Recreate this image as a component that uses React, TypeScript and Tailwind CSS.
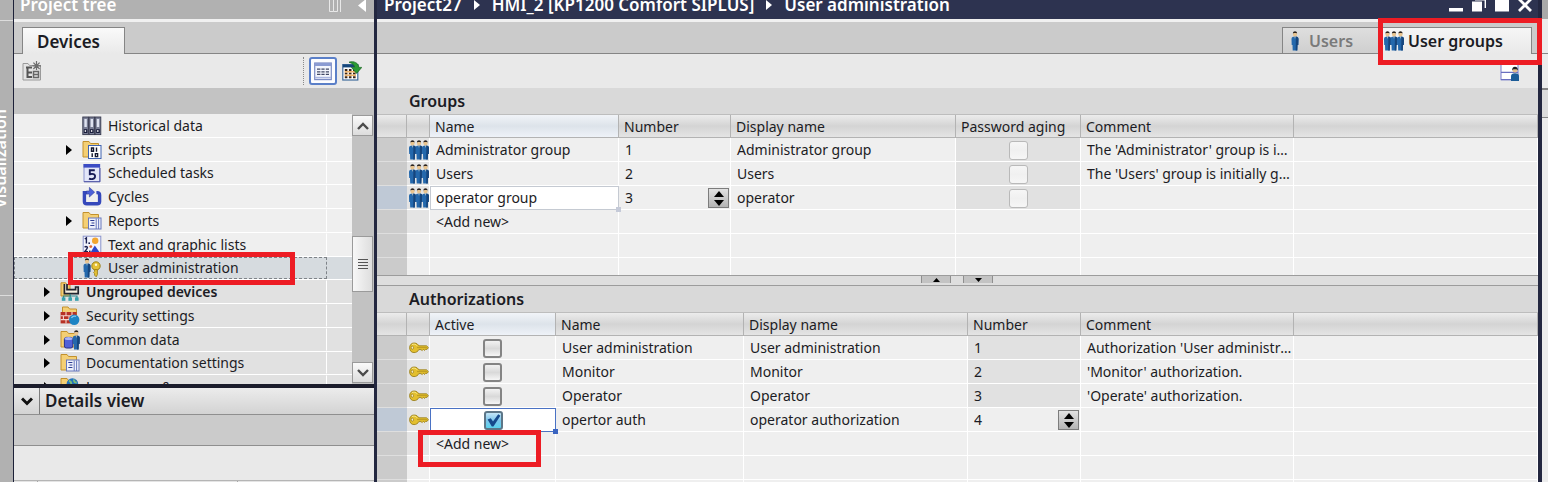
import React, { useState } from "react";

/* ---------- icons ---------- */

function PersonShape({ x = 0 }: { x?: number }) {
  return (
    <g transform={`translate(${x} 0)`}>
      <ellipse cx="3.5" cy="3.2" rx="2" ry="2.5" fill="#e9c48f" />
      <path d="M1.4 2.6C1.4-.4 5.6-.4 5.6 2.6L4.6 1.9H2.6Z" fill="#2a2320" />
      <path d="M0 8C0 6 1.6 5.4 3.5 5.4S7 6 7 8L6.8 14H6L5.8 19.4H1.2L1 14H.2Z" fill="#2468ac" />
      <path d="M4.4 5.6C6 5.8 7 6.4 7 8L6.8 14H6L5.8 19.4H4.2Z" fill="#16457c" />
      <path d="M3 5.6H4L3.5 8Z" fill="#f3e3c8" />
    </g>
  );
}

function GroupIcon() {
  return (
    <svg width="20" height="20" viewBox="0 0 20 20" className="shrink-0" aria-hidden="true">
      <PersonShape x={0} />
      <PersonShape x={6.5} />
      <PersonShape x={13} />
    </svg>
  );
}

function UserIcon() {
  return (
    <svg width="8" height="20" viewBox="0 0 8 20" className="shrink-0" aria-hidden="true">
      <PersonShape x={0.5} />
    </svg>
  );
}

function KeyIcon() {
  return (
    <svg width="20" height="12" viewBox="0 0 20 12" className="shrink-0" aria-hidden="true">
      <path
        d="M5 1C8 1 9 2.6 9.8 3.8H17.5L19.4 5.6L18 7.4L16.6 7.2L15.6 8.4L14.4 7.4L13.2 8.6L12 7.6H9.8C9 9.4 7.4 10.6 5 10.6C2.2 10.6.6 8.4.6 5.8S2.2 1 5 1Z"
        fill="#e3bf2e"
        stroke="#94790f"
        strokeWidth="0.8"
      />
      <path d="M3 2.6C4.6 1.8 6.8 2 8 3.8" stroke="#f8e98c" strokeWidth="1" fill="none" />
      <ellipse cx="3.3" cy="5.7" rx="1.1" ry="1.6" fill="#fff7cf" stroke="#8f7413" strokeWidth="0.7" />
      <path d="M8 5.6H18" stroke="#b3921e" strokeWidth="0.8" />
    </svg>
  );
}

function FolderBack() {
  return (
    <path d="M1 1.5H7L8.5 3.5H16.5V17H1Z" fill="#f4cf74" stroke="#c3912c" strokeWidth="1" />
  );
}

function SheetShape() {
  return (
    <g>
      <rect x="6.5" y="7" width="12.5" height="11" fill="#eef1fb" stroke="#6878bd" />
      <path d="M8.3 9.5H12.4M9.5 12H12.4M8.3 14.5H12.4" stroke="#2d3d93" strokeWidth="1.2" />
      <path d="M14.2 7.5V18M16.6 7.5V18" stroke="#6878bd" />
    </g>
  );
}

type IconName =
  | "history"
  | "scripts"
  | "tasks"
  | "cycles"
  | "reports"
  | "lists"
  | "useradmin"
  | "devices"
  | "security"
  | "common"
  | "docs"
  | "languages";

function TreeIcon({ name }: { name: IconName }) {
  return (
    <svg width="20" height="20" viewBox="0 0 20 20" className="shrink-0" aria-hidden="true">
      {name === "history" && (
        <g>
          {[0.8, 7, 13.2].map((x) => (
            <g key={x}>
              <rect x={x} y="1" width="5.6" height="17.6" fill="#7a7f96" stroke="#35384d" strokeWidth="0.9" />
              <rect x={x + 1.6} y="3" width="2.4" height="8" fill="#dfe3f0" />
              <rect x={x + 1} y="13.2" width="3.6" height="3.8" fill="#181b38" />
              <rect x={x + 1.9} y="14.2" width="1.4" height="1.6" fill="#fff" />
            </g>
          ))}
        </g>
      )}
      {name === "scripts" && (
        <g>
          <FolderBack />
          <rect x="6.5" y="5.5" width="12.5" height="13" fill="#fff" stroke="#3f63b0" />
          <path d="M9.5 8V11.2H11.5V8ZM14.5 7.4V11.8M10.2 13.2V17M13.4 13.6V16.6H15.6V13.6Z" fill="none" stroke="#14182e" strokeWidth="1.4" />
        </g>
      )}
      {name === "tasks" && (
        <g>
          <rect x="2" y="1.5" width="15.6" height="17" fill="#e3e6f9" stroke="#8c93cf" />
          <rect x="1.5" y="1" width="16.6" height="3.6" fill="#3c4cc4" />
          <path d="M12.8 7.2H7.8V11.2C12.6 10.2 13.4 12.2 13 14C12.6 16.2 9.4 16.6 7 15.6" fill="none" stroke="#181c58" strokeWidth="1.9" />
          <path d="M18 5V18.8H2" stroke="#4a50a0" fill="none" />
        </g>
      )}
      {name === "cycles" && (
        <g>
          <path d="M5.4 5.6H2.4V14.4Q2.4 16.8 4.8 16.8H15.2Q17.6 16.8 17.6 14.4V8Q17.6 5.6 15.2 5.6H14.4" fill="none" stroke="#3548bb" strokeWidth="3.4" />
          <path d="M4.4 4H7.4V.4L12.6 5.2L7.4 10V7H4.4Z" fill="#4c60d8" stroke="#2b3a9c" strokeWidth="0.6" />
        </g>
      )}
      {(name === "reports" || name === "docs") && (
        <g>
          <FolderBack />
          <SheetShape />
        </g>
      )}
      {name === "lists" && (
        <g>
          <rect x="1.2" y="1.2" width="17.6" height="17.2" fill="#f3f4fc" stroke="#8a93cc" />
          <path d="M2.8 4L4.4 2.8V8.4M2.6 12.2Q4 10.8 5.4 12.2Q5.6 13.6 2.8 16.6H6" fill="none" stroke="#1c2050" strokeWidth="1.4" />
          <rect x="6.4" y="7.4" width="1.6" height="1.6" fill="#1c2050" />
          <rect x="7" y="15.6" width="1.6" height="1.6" fill="#1c2050" />
          <circle cx="13.2" cy="5.8" r="3.2" fill="#f2a62f" />
          <path d="M12.8 10.4L17.4 17H8.8Z" fill="#2b45c9" />
          <circle cx="8.8" cy="11.6" r="1.4" fill="#e0662d" />
        </g>
      )}
      {name === "useradmin" && (
        <g>
          <PersonShape x={1.5} />
          <circle cx="14" cy="8" r="4.2" fill="#e5c136" stroke="#94780f" strokeWidth="0.9" />
          <circle cx="14" cy="6.8" r="1.2" fill="#fff7cf" />
          <path d="M12.6 11.6H15.4V16.6L14.2 18.8L12.6 17.2V15.6L11.6 14.6L12.6 13.6Z" fill="#e5c136" stroke="#94780f" strokeWidth="0.8" />
        </g>
      )}
      {name === "devices" && (
        <g>
          <path d="M1 .8H5.6L7 2.6H10V14H1Z" fill="#f4cf74" stroke="#c3912c" />
          <path d="M4.4 2V11.6H18.2V5H15.6V7.6H7V2" fill="#f6efe0" stroke="#20242f" strokeWidth="1.7" />
          <path d="M3.5 16V14H17V16M10.2 12V16" stroke="#2d8a93" fill="none" strokeWidth="1.2" />
          <rect x="1.8" y="15.4" width="3.6" height="3.4" fill="#37a1ad" />
          <rect x="8.4" y="15.4" width="3.6" height="3.4" fill="#37a1ad" />
          <rect x="15" y="15.4" width="3.6" height="3.4" fill="#37a1ad" />
        </g>
      )}
      {name === "security" && (
        <g>
          <path d="M2.5 1H8L9.6 3H16.5V9H2.5Z" fill="#f4cf74" stroke="#c3912c" />
          <rect x=".6" y="6" width="16" height="11.4" fill="#b73125" />
          <path d="M.6 9.8H16.6M.6 13.6H16.6M6 6V9.8M12 6V9.8M3.4 9.8V13.6M9 9.8V13.6M6 13.6V17.4" stroke="#f3d6cf" strokeWidth="1.1" />
          <circle cx="14.2" cy="13.8" r="5.2" fill="#1d84c4" />
          <path d="M11.4 12Q13 9.4 16 10.4" stroke="#7fc6ee" strokeWidth="1.4" fill="none" />
        </g>
      )}
      {name === "common" && (
        <g>
          <FolderBack />
          <rect x="4.4" y="7.4" width="8.4" height="10.6" rx="2" fill="#5161d8" stroke="#27318e" />
          <ellipse cx="8.6" cy="8.4" rx="4" ry="1.5" fill="#aab4f5" />
          <PersonShape x={12.8} />
        </g>
      )}
      {name === "languages" && (
        <g>
          <FolderBack />
          <circle cx="12.4" cy="7" r="5.8" fill="#2272bd" />
          <path d="M9 3.6Q12 5 11 7.6M14 2.4Q13.6 5.6 16.8 5.6" stroke="#7bc07b" strokeWidth="1.8" fill="none" />
        </g>
      )}
    </svg>
  );
}

function NewGroupIcon() {
  return (
    <svg width="20" height="20" viewBox="0 0 20 20" aria-hidden="true">
      <path d="M1 2.5H6L7.5 4.5H18.5V19H1Z" fill="#e4e4e4" stroke="#9a9a9a" />
      <path d="M4 6.5H10M5.5 6.5V16H10M5.5 11.5H10" stroke="#555" strokeWidth="2" fill="none" />
      <path d="M14.5 0V9M10.4 4.8H19M11.4 1.6L17.6 8M17.6 1.6L11.4 8" stroke="#6d6d6d" strokeWidth="1.2" />
      <path d="M11.5 10.5H16.5V16.5H11.5ZM11.5 13.5H16.5" stroke="#666" strokeWidth="1.5" fill="none" />
    </svg>
  );
}

function OverviewIcon() {
  return (
    <svg width="18" height="19" viewBox="0 0 18 19" aria-hidden="true">
      <rect x=".7" y="1" width="16.6" height="16.6" fill="#f4f6fd" stroke="#7c8cc4" strokeWidth="1.2" />
      <rect x=".7" y="1" width="16.6" height="3" fill="#8b9bd2" />
      <path d="M3 7.2H6.4M7.4 7.2H10.6M11.8 7.2H15M3 9.8H6.4M7.4 9.8H10.6M11.8 9.8H15M3 12.4H6.4M7.4 12.4H10.6M11.8 12.4H15" stroke="#414865" strokeWidth="1.3" />
      <path d="M1 15.6H17" stroke="#aab6df" strokeWidth="1.6" />
    </svg>
  );
}

function OpenEditorIcon() {
  return (
    <svg width="20" height="20" viewBox="0 0 20 20" aria-hidden="true">
      <rect x=".8" y="3.6" width="15" height="15.4" fill="#fff" stroke="#3f6c9c" strokeWidth="1.2" />
      <rect x=".8" y="3.6" width="15" height="2.8" fill="#16477b" />
      <path d="M2.8 9H5.4M6.9 9H9.5M11 9H13.6M2.8 12.6H5.4M6.9 12.6H9.5M11 12.6H13.6M2.8 16.2H5.4M6.9 16.2H9.5M11 16.2H13.6" stroke="#3a2616" strokeWidth="2" />
      <path d="M2.6 10.7H14M2.6 14.3H14" stroke="#f0b46a" strokeWidth="1.4" />
      <path d="M7 1.2C12-.4 16.6 2 16.8 6.4H19.8L14.6 12.4L9.4 6.4H12.6C12.2 4 10.4 2.2 7 1.2Z" fill="#2b9b34" stroke="#17651f" strokeWidth="0.7" />
    </svg>
  );
}

function DialogUserIcon() {
  return (
    <svg width="20" height="19" viewBox="0 0 20 19" aria-hidden="true">
      <rect x="1" y="1" width="17" height="15.6" fill="#fff" stroke="#8c8fd6" strokeWidth="1.2" />
      <path d="M1 9.4H18M1 16.6H18" stroke="#6a6fc0" strokeWidth="1.4" />
      <circle cx="15" cy="7.2" r="2.4" fill="#e6bd8b" />
      <path d="M12.2 7.4Q12 3.8 15 3.8T17.8 7.4L16.6 6.2H13.4Z" fill="#1d1b22" />
      <path d="M11 18V13.4Q11 10.2 15 10.2T19 13.4V18Z" fill="#1c5c97" />
    </svg>
  );
}

function Crumb() {
  return (
    <svg width="6" height="10" viewBox="0 0 6 10" aria-hidden="true">
      <path d="M0 0L6 5L0 10Z" fill="#fff" />
    </svg>
  );
}

/* ---------- shared bits ---------- */

const callout = "pointer-events-none absolute z-20 border-[5px] border-[#ed1c24]";

function Spinner({ label }: { label: string }) {
  return (
    <span className="flex h-5 w-[21px] flex-col border border-[#7c7c7c] bg-linear-to-b from-[#e2e2e2] to-[#b4b4b4]">
      <button type="button" aria-label={`Increase ${label}`} className="flex flex-1 items-center justify-center">
        <svg width="10" height="6" viewBox="0 0 10 6" aria-hidden="true">
          <path d="M0 6L5 0L10 6Z" />
        </svg>
      </button>
      <button type="button" aria-label={`Decrease ${label}`} className="flex flex-1 items-center justify-center">
        <svg width="10" height="6" viewBox="0 0 10 6" aria-hidden="true">
          <path d="M0 0L5 6L10 0Z" />
        </svg>
      </button>
    </span>
  );
}

function NumberField({ label, initial }: { label: string; initial: string }) {
  const [value, setValue] = useState(initial);
  return (
    <span className="flex items-center justify-between pr-px">
      <input
        aria-label={label}
        value={value}
        onChange={(e) => setValue(e.target.value)}
        className="w-12 min-w-0 bg-transparent outline-none"
      />
      <Spinner label={label} />
    </span>
  );
}

function Tick({ label, disabled = false, initial = false }: { label: string; disabled?: boolean; initial?: boolean }) {
  const [on, setOn] = useState(initial);
  return (
    <span className="relative mx-auto block size-[19px]">
      <input
        type="checkbox"
        aria-label={label}
        disabled={disabled}
        checked={on}
        onChange={() => setOn(!on)}
        className="block size-[19px] appearance-none rounded-[3px] border-2 border-[#848484] bg-linear-to-b from-[#f2f2f2] via-[#d9d9d9] to-[#f6f6f6] checked:border-[#5d7687] checked:from-[#c4e6f8] checked:via-[#7cc6ec] checked:to-[#58d3ee] disabled:border disabled:border-[#b9b9b9] disabled:from-[#f6f6f6] disabled:via-[#f0f0f0] disabled:to-[#f6f6f6]"
      />
      {on && (
        <svg viewBox="0 0 19 19" className="pointer-events-none absolute inset-0" aria-hidden="true">
          <path d="M3.6 8.6L6.8 7.2L9 10.4L14.2 3.2L16.4 4.8L9.4 15.6H7.8Z" fill="#164a8c" />
        </svg>
      )}
    </span>
  );
}

const headCell =
  "h-[23px] border-r border-b border-[#b3b3b3] p-0 pt-0.5 pl-[5px] text-left align-middle font-normal whitespace-nowrap bg-linear-to-b from-[#ececec] via-[#d4d4d4] to-[#e4e4e4]";
const headCellActive =
  "h-[23px] border-r border-b border-[#b3b3b3] p-0 pt-0.5 pl-[5px] text-left align-middle font-normal whitespace-nowrap bg-linear-to-b from-[#f1f4f8] via-[#dde3ea] to-[#eef2f8]";
const cell = "h-6 truncate border-r border-b border-white bg-[#efefef] p-0 pt-px pl-1.5";
const lockedCell = "h-6 truncate border-r border-b border-white bg-[#e1e1e1] p-0 pt-px pl-1.5";
const gutterCell = "h-6 border-b border-[#dedede] bg-[#cbcbcb] p-0";
const gutterActive = "h-6 border-b border-[#dedede] bg-[#bfc9d6] p-0";
const iconCell = "h-6 border-r border-b border-white bg-[#e4e4e4] p-0 pt-px pl-0.5";

function EmptyRows({ count, columns }: { count: number; columns: number }) {
  return (
    <>
      {Array.from({ length: count }, (_, r) => (
        <tr key={r}>
          <td className={gutterCell} />
          {Array.from({ length: columns }, (_, c) => (
            <td key={c} className={cell} />
          ))}
        </tr>
      ))}
    </>
  );
}

/* ---------- project tree ---------- */

type Node = { label: string; icon: IconName; level: 1 | 2; open?: boolean; bold?: boolean; selected?: boolean };

const nodes: Node[] = [
  { label: "Historical data", icon: "history", level: 2 },
  { label: "Scripts", icon: "scripts", level: 2, open: true },
  { label: "Scheduled tasks", icon: "tasks", level: 2 },
  { label: "Cycles", icon: "cycles", level: 2 },
  { label: "Reports", icon: "reports", level: 2, open: true },
  { label: "Text and graphic lists", icon: "lists", level: 2 },
  { label: "User administration", icon: "useradmin", level: 2, selected: true },
  { label: "Ungrouped devices", icon: "devices", level: 1, open: true, bold: true },
  { label: "Security settings", icon: "security", level: 1, open: true },
  { label: "Common data", icon: "common", level: 1, open: true },
  { label: "Documentation settings", icon: "docs", level: 1, open: true },
  { label: "Languages & resources", icon: "languages", level: 1, open: true },
];

function TreeRow({ node }: { node: Node }) {
  const shade = node.selected ? "bg-[#d6dbdf]" : node.level === 1 ? "bg-[#e1e1e1]" : "bg-[#efefef]";
  return (
    <li className={`relative flex min-h-0 border-b border-white ${shade}`}>
      <div
        className={`flex w-[313px] items-center gap-1.5 border pt-px ${
          node.selected ? "border-dashed border-[#7e8388]" : "border-transparent border-r-white"
        } ${node.level === 1 ? "pl-[29px]" : "pl-[51px]"}`}
      >
        <span className="flex w-2.5 shrink-0">
          {node.open && (
            <svg width="6" height="10" viewBox="0 0 6 10" aria-hidden="true">
              <path d="M0 0L6 5L0 10Z" />
            </svg>
          )}
        </span>
        <TreeIcon name={node.icon} />
        <span className={`whitespace-nowrap ${node.bold ? "font-semibold" : ""}`}>{node.label}</span>
      </div>
      {node.selected && <span className={`${callout} -top-[5px] -bottom-1.5 left-[54px] w-[227px]`} />}
    </li>
  );
}

function ProjectTree() {
  return (
    <aside className="flex w-[361px] shrink-0 flex-col border-l border-[#1d2138] bg-[#cbcbcb]">
      <header className="flex h-7 shrink-0 items-center justify-between bg-[#b1b1b1] pr-2 pl-1.5 text-[17px] font-semibold text-white">
        <h2>Project tree</h2>
        <span className="flex items-center gap-4">
          <svg width="13" height="14" viewBox="0 0 13 14" aria-hidden="true">
            <path d="M.5 0V13.5H4.5V0M8.5 0V13.5H4.5M11.5 0V14" fill="none" stroke="#e8e8e8" />
          </svg>
          <button type="button" aria-label="Collapse project tree">
            <svg width="8" height="13" viewBox="0 0 8 13" aria-hidden="true">
              <path d="M8 0L0 6.5L8 13Z" fill="#fff" />
            </svg>
          </button>
        </span>
      </header>
      <div className="flex h-[35px] shrink-0 items-end border-t-[3px] border-[#f0f0f0]">
        <span className="h-full w-2 border-b border-[#858585]" />
        <button
          type="button"
          role="tab"
          aria-selected="true"
          className="mt-[5px] h-[27px] w-[103px] self-stretch border border-b-0 border-[#858585] bg-linear-to-b from-[#fafafa] to-[#e9e9e9] pr-2.5 text-[17px] leading-[25px] font-semibold"
        >
          Devices
        </button>
        <span className="h-full flex-1 border-b border-[#858585]" />
      </div>
      <div className="flex h-[34px] shrink-0 items-center bg-[#e9e9e9] pr-3 pl-2">
        <button type="button" aria-label="Add group" disabled>
          <NewGroupIcon />
        </button>
        <span className="ml-auto h-7 border-l border-dotted border-[#8a8a8a]" />
        <button
          type="button"
          aria-label="Show overview"
          aria-pressed="true"
          className="ml-[5px] flex h-7 w-7 items-center justify-center rounded-[3px] border-2 border-[#5a7fc8] bg-[#fdfdff]"
        >
          <OverviewIcon />
        </button>
        <button type="button" aria-label="Open editor" className="ml-[5px]">
          <OpenEditorIcon />
        </button>
      </div>
      <div className="h-[26px] shrink-0 bg-[#c3c3c3]" />
      <div className="flex h-[270px] shrink-0 overflow-hidden">
        <ul className="grid h-[285px] flex-1 auto-rows-fr">
          {nodes.map((n) => (
            <TreeRow key={n.label} node={n} />
          ))}
        </ul>
        <div className="flex w-[22px] flex-col bg-[#c2c2c2] py-px pr-px">
          <button
            type="button"
            aria-label="Scroll up"
            className="flex h-[21px] items-center justify-center border border-[#9a9a9a] bg-linear-to-b from-[#fafafa] to-[#dcdcdc]"
          >
            <svg width="12" height="8" viewBox="0 0 12 8" aria-hidden="true">
              <path d="M1 7L6 2L11 7" fill="none" stroke="#4a4a4a" strokeWidth="2.4" />
            </svg>
          </button>
          <span className="flex-[100]" />
          <span className="flex h-14 flex-col items-center justify-center gap-0.5 border border-[#9a9a9a] bg-linear-to-r from-[#f7f7f7] to-[#dedede]">
            <span className="h-px w-2.5 bg-[#555]" />
            <span className="h-px w-2.5 bg-[#555]" />
            <span className="h-px w-2.5 bg-[#555]" />
            <span className="h-px w-2.5 bg-[#555]" />
          </span>
          <span className="flex-[70]" />
          <button
            type="button"
            aria-label="Scroll down"
            className="flex h-[21px] items-center justify-center border border-[#9a9a9a] bg-linear-to-b from-[#fafafa] to-[#dcdcdc]"
          >
            <svg width="12" height="8" viewBox="0 0 12 8" aria-hidden="true">
              <path d="M1 1L6 6L11 1" fill="none" stroke="#4a4a4a" strokeWidth="2.4" />
            </svg>
          </button>
        </div>
      </div>
      <div className="h-1 shrink-0 bg-[#1b1c2b]" />
      <header className="flex h-[27px] shrink-0 items-stretch border-b border-[#8f8f8f] bg-linear-to-b from-[#ececec] to-[#d3d3d3]">
        <button
          type="button"
          aria-label="Collapse details view"
          className="flex w-[26px] items-center justify-center border-r border-[#7d7d7d]"
        >
          <svg width="12" height="9" viewBox="0 0 12 9" aria-hidden="true">
            <path d="M1 1.5L6 6.5L11 1.5" fill="none" stroke="#111" strokeWidth="3" />
          </svg>
        </button>
        <h2 className="self-center pl-[5px] text-[17px] leading-6 font-semibold">Details view</h2>
      </header>
      <div className="h-[31px] shrink-0 border-b border-[#8f8f8f] bg-[#cbcbcb]" />
      <div className="h-[34px] shrink-0 bg-[#e9e9e9]" />
      <div className="flex min-h-0.5 flex-1 border-t border-[#b5b5b5] bg-[#e4e4e4]">
        <span className="w-6 border-r border-[#a8a8a8]" />
        <span className="w-[200px] border-r border-[#a8a8a8]" />
      </div>
    </aside>
  );
}

/* ---------- editor tables ---------- */

const groups = [
  { name: "Administrator group", number: "1", display: "Administrator group", comment: "The 'Administrator' group is initially granted all rights." },
  { name: "Users", number: "2", display: "Users", comment: "The 'Users' group is initially granted operating rights." },
  { name: "operator group", number: "3", display: "operator", comment: "" },
];

function GroupsTable() {
  const [name, setName] = useState("operator group");
  return (
    <table className="w-full table-fixed border-separate border-spacing-0">
      <colgroup>
        <col className="w-[30px]" />
        <col className="w-[23px]" />
        <col className="w-[189px]" />
        <col className="w-[112px]" />
        <col className="w-[225px]" />
        <col className="w-[125px]" />
        <col className="w-[213px]" />
        <col />
      </colgroup>
      <thead>
        <tr>
          <th className={headCell} />
          <th className={headCell} />
          <th className={headCellActive}>Name</th>
          <th className={headCell}>Number</th>
          <th className={headCell}>Display name</th>
          <th className={headCell}>Password aging</th>
          <th className={headCell}>Comment</th>
          <th className={headCell} />
        </tr>
      </thead>
      <tbody>
        {groups.map((g, i) => (
          <tr key={g.name}>
            <td className={i === 2 ? gutterActive : gutterCell} />
            <td className={iconCell}>
              <GroupIcon />
            </td>
            {i === 2 ? (
              <td className="relative h-6 border border-[#c5cad2] bg-white p-0 pl-[5px]">
                <input
                  aria-label="Group name"
                  value={name}
                  onChange={(e) => setName(e.target.value)}
                  className="block w-full bg-transparent outline-none"
                />
                <span className="absolute -right-[3px] -bottom-[3px] z-10 size-[5px] bg-[#c5cad8]" />
              </td>
            ) : (
              <td className={cell}>{g.name}</td>
            )}
            <td className={cell}>{i === 2 ? <NumberField label="Group number" initial="3" /> : g.number}</td>
            <td className={cell}>{g.display}</td>
            <td className="h-6 border-r border-b border-white bg-[#e1e1e1] p-0 pt-px">
              <Tick label={`Password aging for ${g.name}`} disabled />
            </td>
            <td className={cell}>{g.comment}</td>
            <td className={cell} />
          </tr>
        ))}
        <tr>
          <td className={gutterCell} />
          <td className={iconCell} />
          <td className={cell}>&lt;Add new&gt;</td>
          <td className={cell} />
          <td className={cell} />
          <td className={cell} />
          <td className={cell} />
          <td className={cell} />
        </tr>
        <EmptyRows count={2} columns={7} />
      </tbody>
    </table>
  );
}

const authorizations = [
  { name: "User administration", display: "User administration", number: "1", comment: "Authorization 'User administration' is granted." },
  { name: "Monitor", display: "Monitor", number: "2", comment: "'Monitor' authorization." },
  { name: "Operator", display: "Operator", number: "3", comment: "'Operate' authorization." },
  { name: "opertor auth", display: "operator authorization", number: "4", comment: "" },
];

function AuthorizationsTable() {
  return (
    <table className="w-full table-fixed border-separate border-spacing-0">
      <colgroup>
        <col className="w-[30px]" />
        <col className="w-[23px]" />
        <col className="w-[126px]" />
        <col className="w-[188px]" />
        <col className="w-[224px]" />
        <col className="w-[113px]" />
        <col className="w-[213px]" />
        <col />
      </colgroup>
      <thead>
        <tr>
          <th className={headCell} />
          <th className={headCell} />
          <th className={headCellActive}>Active</th>
          <th className={headCell}>Name</th>
          <th className={headCell}>Display name</th>
          <th className={headCell}>Number</th>
          <th className={headCell}>Comment</th>
          <th className={headCell} />
        </tr>
      </thead>
      <tbody>
        {authorizations.map((a, i) => (
          <tr key={a.name}>
            <td className={i === 3 ? gutterActive : gutterCell} />
            <td className={iconCell}>
              <KeyIcon />
            </td>
            {i === 3 ? (
              <td className="relative h-6 border border-[#4a72c4] bg-white p-0">
                <Tick label={`${a.name} active`} initial />
                <span className="absolute -right-[3px] -bottom-[3px] z-10 size-[5px] bg-[#3a64c0]" />
              </td>
            ) : (
              <td className="h-6 border-r border-b border-white bg-[#efefef] p-0 pt-px">
                <Tick label={`${a.name} active`} />
              </td>
            )}
            <td className={cell}>{a.name}</td>
            <td className={cell}>{a.display}</td>
            {i === 3 ? (
              <td className={cell}>
                <NumberField label="Authorization number" initial="4" />
              </td>
            ) : (
              <td className={lockedCell}>{a.number}</td>
            )}
            <td className={cell}>{a.comment}</td>
            <td className={cell} />
          </tr>
        ))}
        <tr>
          <td className={gutterCell} />
          <td className={iconCell} />
          <td className="relative h-6 border-r border-b border-white bg-[#efefef] p-0 pl-1.5">
            &lt;Add new&gt;
            <span className={`${callout} -top-0.5 -left-3 h-[37px] w-[123px]`} />
          </td>
          <td className={cell} />
          <td className={cell} />
          <td className={cell} />
          <td className={cell} />
          <td className={cell} />
        </tr>
        <EmptyRows count={2} columns={7} />
      </tbody>
    </table>
  );
}

/* ---------- editor window ---------- */

function Editor() {
  return (
    <main className="flex min-w-0 flex-1 flex-col border-r-4 border-l-[3px] border-[#232740] bg-[#d9d9d9]">
      <header className="flex h-7 shrink-0 items-center gap-3 bg-[#2d3350] pr-1.5 pl-[7px] text-[17px] font-semibold whitespace-nowrap text-white">
        <span>Project27</span>
        <Crumb />
        <span>HMI_2 [KP1200 Comfort SIPLUS]</span>
        <Crumb />
        <span>User administration</span>
        <span className="ml-auto flex items-center gap-[9px]">
          <button type="button" aria-label="Minimize">
            <svg width="14" height="14" viewBox="0 0 14 14" aria-hidden="true">
              <path d="M0 10H14V13.5H0Z" fill="#fff" />
            </svg>
          </button>
          <button type="button" aria-label="Float">
            <svg width="14" height="14" viewBox="0 0 14 14" aria-hidden="true">
              <path d="M0 3.5H10V13.5H0ZM3 0H14V10H12.6V2.4H3Z" fill="#fff" />
            </svg>
          </button>
          <button type="button" aria-label="Maximize">
            <svg width="14" height="14" viewBox="0 0 14 14" aria-hidden="true">
              <path d="M0 1H14V13.5H0Z" fill="#fff" />
            </svg>
          </button>
          <button type="button" aria-label="Close">
            <svg width="14" height="14" viewBox="0 0 14 14" aria-hidden="true">
              <path d="M1 1L13 13M13 1L1 13" stroke="#fff" strokeWidth="2.8" />
            </svg>
          </button>
        </span>
      </header>
      <div role="tablist" className="flex h-[35px] shrink-0 items-end border-t-[3px] border-[#f0f0f0] bg-[#cbcbcb]">
        <span className="h-full flex-1 border-b border-[#858585]" />
        <button
          type="button"
          role="tab"
          aria-selected="false"
          className="flex h-[27px] w-[99px] items-center gap-2.5 border border-r-0 border-[#858585] bg-linear-to-b from-[#dedede] to-[#cfcfcf] pl-2 text-base leading-6 font-semibold text-[#7a7a7a]"
        >
          <UserIcon />
          Users
        </button>
        <button
          type="button"
          role="tab"
          aria-selected="true"
          className="relative flex h-[27px] w-[151px] items-center gap-1 border border-b-0 border-[#858585] bg-linear-to-b from-[#f6f6f6] to-[#e9e9e9] pl-0.5 text-base leading-6 font-semibold whitespace-nowrap"
        >
          <GroupIcon />
          User groups
          <span className={`${callout} -top-[10px] -right-[11px] h-[47px] w-[164px]`} />
        </button>
        <span className="h-full w-1.5 border-b border-[#858585]" />
      </div>
      <div className="flex h-[34px] shrink-0 items-center justify-end bg-[#e9e9e9] pt-0.5 pr-[18px]">
        <button type="button" aria-label="User settings">
          <DialogUserIcon />
        </button>
      </div>
      <h2 className="h-[27px] shrink-0 border-b border-[#bdbdbd] pl-8 text-base leading-[26px] font-semibold">Groups</h2>
      <div className="h-40 shrink-0 overflow-hidden bg-[#efefef]">
        <GroupsTable />
      </div>
      <div className="flex h-[11px] shrink-0 gap-3 border-y border-[#9c9c9c] bg-[#dedede] pb-0.5 pl-[544px]">
        <button type="button" aria-label="Collapse upper pane" className="flex w-[30px] items-center justify-center border-x border-[#8f8f8f] bg-[#c3c3c3]">
          <svg width="7" height="4" viewBox="0 0 7 4" aria-hidden="true">
            <path d="M0 4L3.5 0L7 4Z" />
          </svg>
        </button>
        <button type="button" aria-label="Collapse lower pane" className="flex w-[30px] items-center justify-center border-x border-[#8f8f8f] bg-[#c3c3c3]">
          <svg width="7" height="4" viewBox="0 0 7 4" aria-hidden="true">
            <path d="M0 0L3.5 4L7 0Z" />
          </svg>
        </button>
      </div>
      <h2 className="h-[27px] shrink-0 border-b border-[#bdbdbd] pl-8 text-base leading-[26px] font-semibold">Authorizations</h2>
      <div className="min-h-0 flex-1 overflow-hidden bg-[#efefef]">
        <AuthorizationsTable />
      </div>
    </main>
  );
}

export default function App() {
  return (
    <div className="h-screen overflow-hidden bg-[#b1b1b1] font-['Noto_Sans',sans-serif] text-sm text-[#1c1c24]">
      <div className="-mt-[9px] flex h-[calc(100%+9px)]">
        <nav className="flex w-[13px] shrink-0 flex-col overflow-hidden bg-[#b1b1b1] text-white">
          <span className="h-[30px] shrink-0 border-b border-[#dcdcdc]" />
          <div className="flex h-[275px] shrink-0 flex-col items-end border-b border-[#dcdcdc] pt-[88px] pr-0.5">
            <a href="#visualization" className="rotate-180 text-base leading-[22px] font-semibold [writing-mode:vertical-rl]">
              Visualization
            </a>
          </div>
        </nav>
        <ProjectTree />
        <Editor />
        <div className="flex w-1.5 shrink-0 flex-col bg-[#ececec]">
          <span className="h-7 shrink-0 bg-[#a9a9a9]" />
          <span className="h-[35px] shrink-0 border-b border-[#858585]" />
          <span className="h-9 shrink-0 border-b-2 border-[#858585]" />
          <span className="h-7 shrink-0 border-b border-[#858585] bg-[#dcdcdc]" />
        </div>
      </div>
    </div>
  );
}
